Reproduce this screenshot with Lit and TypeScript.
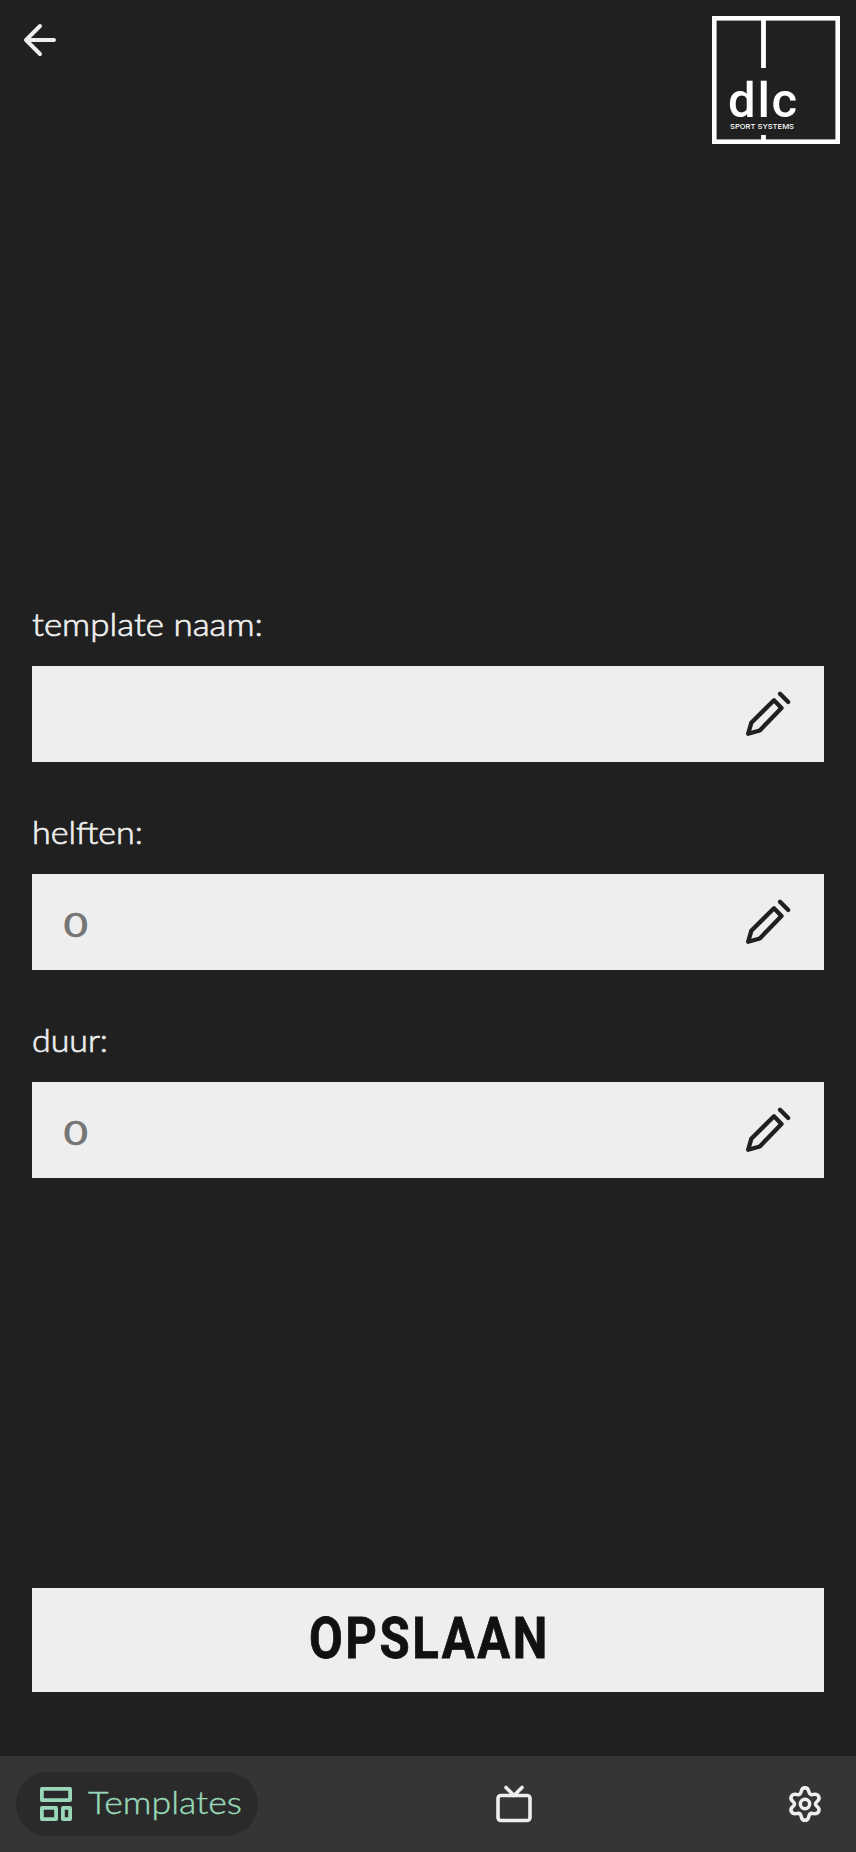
import { LitElement, html, svg, css } from "lit";
import { customElement } from "lit/decorators.js";

const fields = [
  { label: "template naam:", width: 231, placeholder: "" },
  { label: "helften:", width: 111, placeholder: "0" },
  { label: "duur:", width: 76, placeholder: "0" },
];

const gearQuarter = "M104.5 113C98 113 95 117 94 122C92 131 89 135 83 134C75 132 68 131 63.500 139C60 147 64 151 68 154Q73 158 73 162";

@customElement("app-root")
export class AppRoot extends LitElement {
  static styles = css`
    :host { display: block; }
    * { box-sizing: border-box; }
    svg { display: block; overflow: visible; flex: none; }
    .page { height: 1852px; background: #202020; display: flex; flex-direction: column; font-family: Lato, "Open Sans", sans-serif; color: #eee; }
    header { height: 602px; padding: 16px; display: flex; justify-content: space-between; align-items: flex-start; }
    .line { fill: none; stroke: currentColor; stroke-linecap: round; stroke-linejoin: round; }
    form { flex: 1; padding: 0 32px; display: flex; flex-direction: column; }
    .field { height: 208px; display: flex; flex-direction: column; }
    .label { height: 64px; }
    .label svg { fill: #eee; }
    .label text, .pill text { font-size: 32px; font-weight: 300; stroke-width: 0.7px; }
    .label text { stroke: #eee; }
    .box { height: 96px; background: #eee; color: #202020; display: flex; align-items: center; justify-content: space-between; padding: 0 32px; }
    .zero { fill: #757575; stroke: #757575; stroke-width: 0.7px; font-size: 32px; font-family: Lato, sans-serif; }
    .save { height: 104px; border: 0; padding: 0; margin: auto 0 64px; background: #eee; display: flex; justify-content: center; }
    .save text { font: 700 57px Roboto, sans-serif; letter-spacing: 3px; fill: #111; stroke: #111; stroke-width: 0.8px; }
    .wordmark { font: 500 49px Roboto, sans-serif; fill: #fff; }
    .tagline { font: 500 6.800px Inter, sans-serif; fill: #fff; }
    nav { height: 96px; background: #353535; display: flex; align-items: center; justify-content: space-between; padding: 0 32px 0 16px; }
    .pill { width: 242px; height: 64px; border-radius: 32px; background: #2a2a2a; color: #98d8b9; display: flex; align-items: center; padding-left: 24px; gap: 16px; }
    .pill text { fill: #98d8b9; stroke: #98d8b9; stroke-width: 0.4px; }
    .tv { margin-right: 16px; }
  `;

  private pencil() {
    return html`<svg width="48" height="48" viewBox="744 690 48 48"><g class="line" stroke-width="4.300">
      <path d="M748.200 733.700L751.300 722.800L774 700.200L781.500 707.900L759.800 730.500Z"/><path d="M780 693.800L788.200 702"/>
    </g></svg>`;
  }

  render() {
    return html`<div class="page">
      <header>
        <svg width="48" height="48" viewBox="0 0 24 24"><path class="line" stroke-width="2" d="M19 12H5M12 19L5 12L12 5"/></svg>
        <svg width="128" height="128" viewBox="0 0 128 128">
          <rect x="2.300" y="2.300" width="123.400" height="123.400" fill="none" stroke="#fff" stroke-width="4.600"/>
          <path d="M51.500 0V52M51.500 119V128" stroke="#fff" stroke-width="4.800"/>
          <text class="wordmark" x="16 45.500 59.500" y="101">dlc</text>
          <text class="tagline" x="18" y="113" textLength="64" lengthAdjust="spacingAndGlyphs">SPORT SYSTEMS</text>
        </svg>
      </header>
      <form>
        ${fields.map((f) => html`<div class="field">
          <div class="label"><svg width="300" height="64"><text x="0" y="34" textLength=${f.width} lengthAdjust="spacingAndGlyphs">${f.label}</text></svg></div>
          <div class="box">
            <svg width="30" height="48">${f.placeholder ? svg`<text class="zero" x="-0.300" y="38.500" textLength="24" lengthAdjust="spacingAndGlyphs">${f.placeholder}</text>` : ""}</svg>
            ${this.pencil()}
          </div>
        </div>`)}
        <button class="save" type="button"><svg width="240" height="104"><text x="1" y="70" textLength="241" lengthAdjust="spacingAndGlyphs">OPSLAAN</text></svg></button>
      </form>
      <nav>
        <div class="pill">
          <svg width="32" height="34" viewBox="0 0 32 34"><g class="line" stroke-width="3.800">
            <rect x="1.900" y="1.900" width="28.200" height="11.200"/><rect x="1.900" y="20.900" width="14.200" height="11.200"/><rect x="22.900" y="20.900" width="7.200" height="11.200"/>
          </g></svg>
          <svg width="154" height="64"><text x="0" y="42" textLength="154" lengthAdjust="spacingAndGlyphs">Templates</text></svg>
        </div>
        <svg class="tv" width="48" height="48" viewBox="490 1780 48 48"><g class="line" stroke-width="3.600">
          <rect x="498" y="1795.500" width="32" height="25" rx="3"/><path d="M506 1787.500L514 1795.500L522 1787.500"/>
        </g></svg>
        <svg width="38" height="38" viewBox="47.500 105 114 114"><g class="line" stroke-width="10.500">
          <path d=${gearQuarter}/><path d=${gearQuarter} transform="matrix(-1 0 0 1 209 0)"/>
          <path d=${gearQuarter} transform="matrix(1 0 0 -1 0 324)"/><path d=${gearQuarter} transform="matrix(-1 0 0 -1 209 324)"/>
          <circle cx="104.500" cy="162" r="14"/>
        </g></svg>
      </nav>
    </div>`;
  }
}
